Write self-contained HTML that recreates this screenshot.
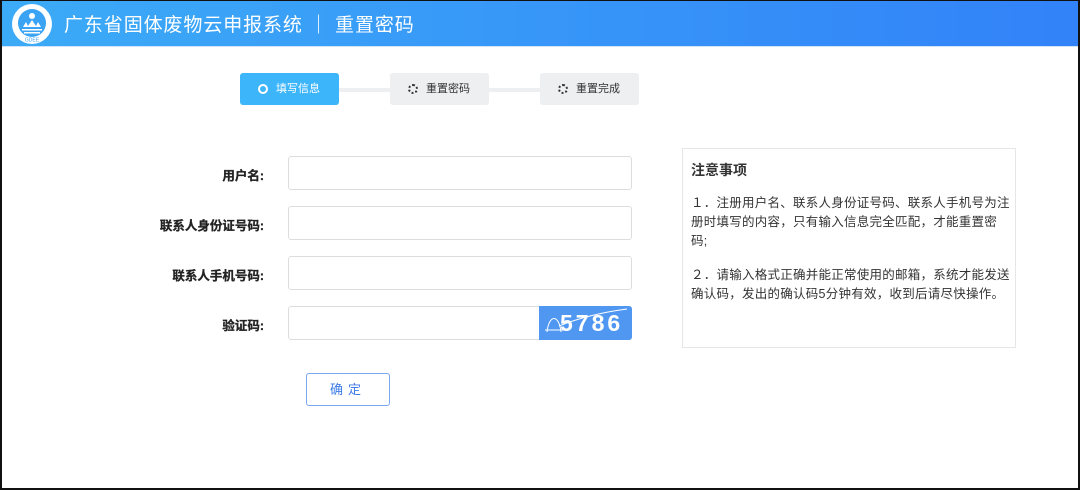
<!DOCTYPE html>
<html><head><meta charset="utf-8">
<style>
*{margin:0;padding:0;box-sizing:border-box}
body{width:1080px;height:490px;overflow:hidden;background:#fff;font-family:"Liberation Sans","Noto Sans CJK SC",sans-serif;position:relative}
.frame{position:absolute;left:0;top:0;width:1080px;height:490px;border:2px solid #111;border-top:1px solid #111;z-index:10;pointer-events:none}
.hdr{position:absolute;left:0;top:0;width:1080px;height:47px;background:linear-gradient(90deg,#3cabf7,#3282f8);border-bottom:1px solid #cfe3fb}
.hdr .t{position:absolute;left:64px;top:10px;color:#fff;font-size:19px;letter-spacing:0.9px}
.logo{position:absolute;left:11px;top:3px}
.step{position:absolute;top:73px;width:99px;height:32px;border-radius:3px;background:#eeeff1;font-size:11px;color:#333;line-height:32px}
.step .ic{position:absolute;left:18px;top:11px;width:10px;height:10px;border-radius:50%;border:2px dotted #333}
.step span{position:absolute;left:36px}
.s1{left:240px;background:#3db5fb;color:#fff}
.s1 .ic{border:2px solid #fff;left:18px}
.line{position:absolute;top:88px;height:4px;background:#eeeff1}
.lbl{position:absolute;right:816px;font-size:12.5px;font-weight:bold;color:#222;white-space:nowrap;-webkit-text-stroke:0.3px #222}
.inp{position:absolute;left:288px;width:344px;height:34px;border:1px solid #ddd;border-radius:3px}
.cap{position:absolute;left:539px;top:306px;width:93px;height:34px;background:#4f97f0;border-radius:0 3px 3px 0;color:#fff;font-size:23px;font-weight:bold;letter-spacing:3px;line-height:34px;padding-left:21px}
.btn{position:absolute;left:306px;top:373px;width:84px;height:33px;border:1px solid #7aa9ee;border-radius:3px;color:#3d7be8;font-size:13px;text-align:center;line-height:31px;letter-spacing:5px}
.note{position:absolute;left:682px;top:148px;width:334px;height:200px;border:1px solid #e6e6e6;padding:10px 0 10px 8px;color:#333}
.note h3{font-size:14px;font-weight:bold;margin-bottom:14px;margin-top:1px}
.note p{font-size:12.5px;line-height:19px;margin-bottom:15px;letter-spacing:0.25px;white-space:nowrap}
</style></head><body>
<div class="hdr">
<svg class="logo" width="42" height="42" viewBox="0 0 42 42">
<circle cx="21" cy="21" r="20" fill="#fff"/>
<circle cx="21" cy="20" r="14" fill="#3ba3f3"/>
<circle cx="21" cy="13" r="3" fill="#fff"/>
<path d="M12 24 L15 19 L17 23 L21 17 L25 23 L27 19 L30 24 Z" fill="#fff"/>
<rect x="11" y="26" width="20" height="1.5" fill="#fff"/>
<rect x="13" y="29" width="16" height="1.5" fill="#fff"/>
<text x="21" y="38.5" font-size="5" fill="#3ba3f3" text-anchor="middle" font-family="Liberation Sans">GDEE</text>
</svg>
<div class="t">广东省固体废物云申报系统 ｜ 重置密码</div>
</div>
<div class="line" style="left:339px;width:51px"></div>
<div class="line" style="left:489px;width:51px"></div>
<div class="step s1"><i class="ic"></i><span>填写信息</span></div>
<div class="step" style="left:390px"><i class="ic"></i><span>重置密码</span></div>
<div class="step" style="left:540px"><i class="ic"></i><span>重置完成</span></div>

<div class="lbl" style="top:165px">用户名:</div>
<div class="inp" style="top:156px"></div>
<div class="lbl" style="top:215px">联系人身份证号码:</div>
<div class="inp" style="top:206px"></div>
<div class="lbl" style="top:265px">联系人手机号码:</div>
<div class="inp" style="top:256px"></div>
<div class="lbl" style="top:315px">验证码:</div>
<div class="inp" style="top:306px"></div>
<div class="cap">5786</div>
<svg style="position:absolute;left:539px;top:306px" width="93" height="34"><path d="M8 26 C10 8 20 8 22 26 M6 24 L30 24 M20 20 Q50 8 88 3" stroke="#fff" stroke-width="1" fill="none"/></svg>
<div class="btn">确定</div>

<div class="note">
<h3>注意事项</h3>
<p>１．注册用户名、联系人身份证号码、联系人手机号为注<br>册时填写的内容，只有输入信息完全匹配，才能重置密<br>码;</p>
<p>２．请输入格式正确并能正常使用的邮箱，系统才能发送<br>确认码，发出的确认码5分钟有效，收到后请尽快操作。</p>
</div>
<div class="frame"></div>
</body></html>
